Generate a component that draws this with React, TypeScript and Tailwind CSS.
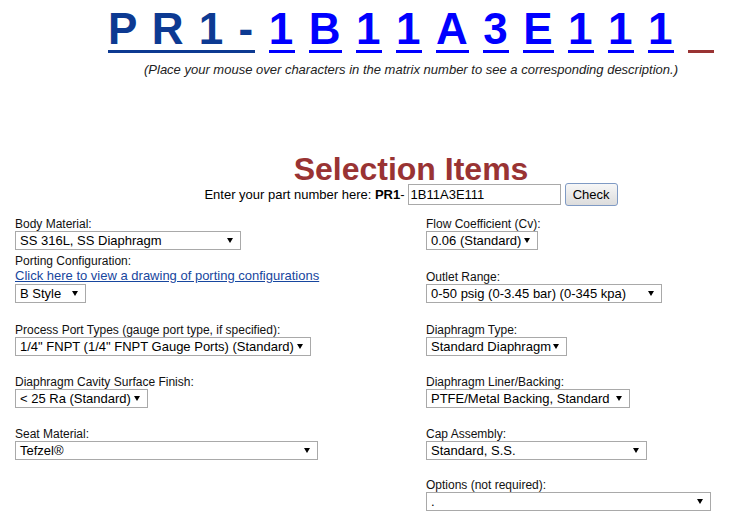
import React from "react";

const Arrow = () => (
  <svg width="6" height="5" viewBox="0 0 6 5" className="shrink-0">
    <path d="M0 0H6L3 5Z" fill="#000" />
  </svg>
);

function Select({ value, w }: { value: string; w: string }) {
  return (
    <div
      className={`${w} h-[19px] border border-[#a9a9a9] bg-white flex items-center justify-between pl-[4px] pr-[7px] text-[13px] leading-[15px] text-black whitespace-nowrap`}
    >
      <span>{value}</span>
      <Arrow />
    </div>
  );
}

function Label({ children, className = "" }: { children: React.ReactNode; className?: string }) {
  return <div className={`text-[12px] leading-[14px] h-[14px] text-[#111] ${className}`}>{children}</div>;
}

function Field({ label, value, w, mt }: { label: string; value: string; w: string; mt: string }) {
  return (
    <div className={`flex flex-col items-start ${mt}`}>
      <Label>{label}</Label>
      <Select value={value} w={w} />
    </div>
  );
}

const chars = ["1", "B", "1", "1", "A", "3", "E", "1", "1", "1"];

export default function App() {
  return (
    <div className="w-[738px] h-[516px] overflow-hidden bg-white text-black font-['Liberation_Sans',Arial,sans-serif]">
      <div className="w-[822px]">
        {/* Matrix number header */}
        <div className="flex justify-center gap-[14px] pt-[8px] text-[44px] font-bold tracking-[1.5px] leading-[42px]">
          <span className="block whitespace-pre text-[#0d3a92] border-b-[3px] border-[#0d3a92]">P R 1 -</span>
          {chars.map((c, i) => (
            <span key={i} className="block text-[#0000ff] border-b-[3px] border-[#0000ff]">
              {c}
            </span>
          ))}
          <span className="block w-[26px] border-b-[3px] border-[#993333]" />
        </div>
        <p className="mt-[9px] text-center italic text-[13px] leading-[15px] text-[#222]">
          (Place your mouse over characters in the matrix number to see a corresponding description.)
        </p>

        {/* Selection Items */}
        <h1 className="mt-[78px] text-center text-[32px] leading-[28px] font-bold text-[#993333]">Selection Items</h1>
        <div className="h-[23px] flex items-center justify-center text-[13px] leading-[15px]">
          <span className="whitespace-pre">Enter your part number here: </span>
          <span className="font-bold">PR1</span>
          <span>-</span>
          <div className="ml-[3px] w-[153px] h-[21px] border border-[#a9a9a9] bg-white flex items-center pl-[2px] text-[13px]">
            1B11A3E111
          </div>
          <button className="ml-[4px] w-[53px] h-[23px] rounded-[3px] border border-[#7f9ac4] bg-linear-to-b from-[#f7f7f7] to-[#dcdcdc] text-[13px] leading-[15px] text-black">
            Check
          </button>
        </div>

        {/* Form columns */}
        <div className="mt-[11px] grid grid-cols-2">
          <div className="pl-[15px] flex flex-col items-start">
            <Field label="Body Material:" value="SS 316L, SS Diaphragm" w="w-[226px]" mt="" />
            <Label className="mt-[4px]">Porting Configuration:</Label>
            <a className="block h-[16px] text-[13px] leading-[16px] text-[#17469e] underline">
              Click here to view a drawing of porting configurations
            </a>
            <Select value="B Style" w="w-[71px]" />
            <Field
              label="Process Port Types (gauge port type, if specified):"
              value={'1/4" FNPT (1/4" FNPT Gauge Ports) (Standard)'}
              w="w-[296px]"
              mt="mt-[20px]"
            />
            <Field label="Diaphragm Cavity Surface Finish:" value="< 25 Ra (Standard)" w="w-[133px]" mt="mt-[19px]" />
            <Field label="Seat Material:" value="Tefzel®" w="w-[303px]" mt="mt-[19px]" />
          </div>
          <div className="pl-[15px] flex flex-col items-start">
            <Field label="Flow Coefficient (Cv):" value="0.06 (Standard)" w="w-[112px]" mt="" />
            <Field label="Outlet Range:" value="0-50 psig (0-3.45 bar) (0-345 kpa)" w="w-[236px]" mt="mt-[20px]" />
            <Field label="Diaphragm Type:" value="Standard Diaphragm" w="w-[141px]" mt="mt-[20px]" />
            <Field label="Diaphragm Liner/Backing:" value="PTFE/Metal Backing, Standard" w="w-[204px]" mt="mt-[19px]" />
            <Field label="Cap Assembly:" value="Standard, S.S." w="w-[221px]" mt="mt-[19px]" />
            <Field label="Options (not required):" value="." w="w-[285px]" mt="mt-[18px]" />
          </div>
        </div>
      </div>
    </div>
  );
}
